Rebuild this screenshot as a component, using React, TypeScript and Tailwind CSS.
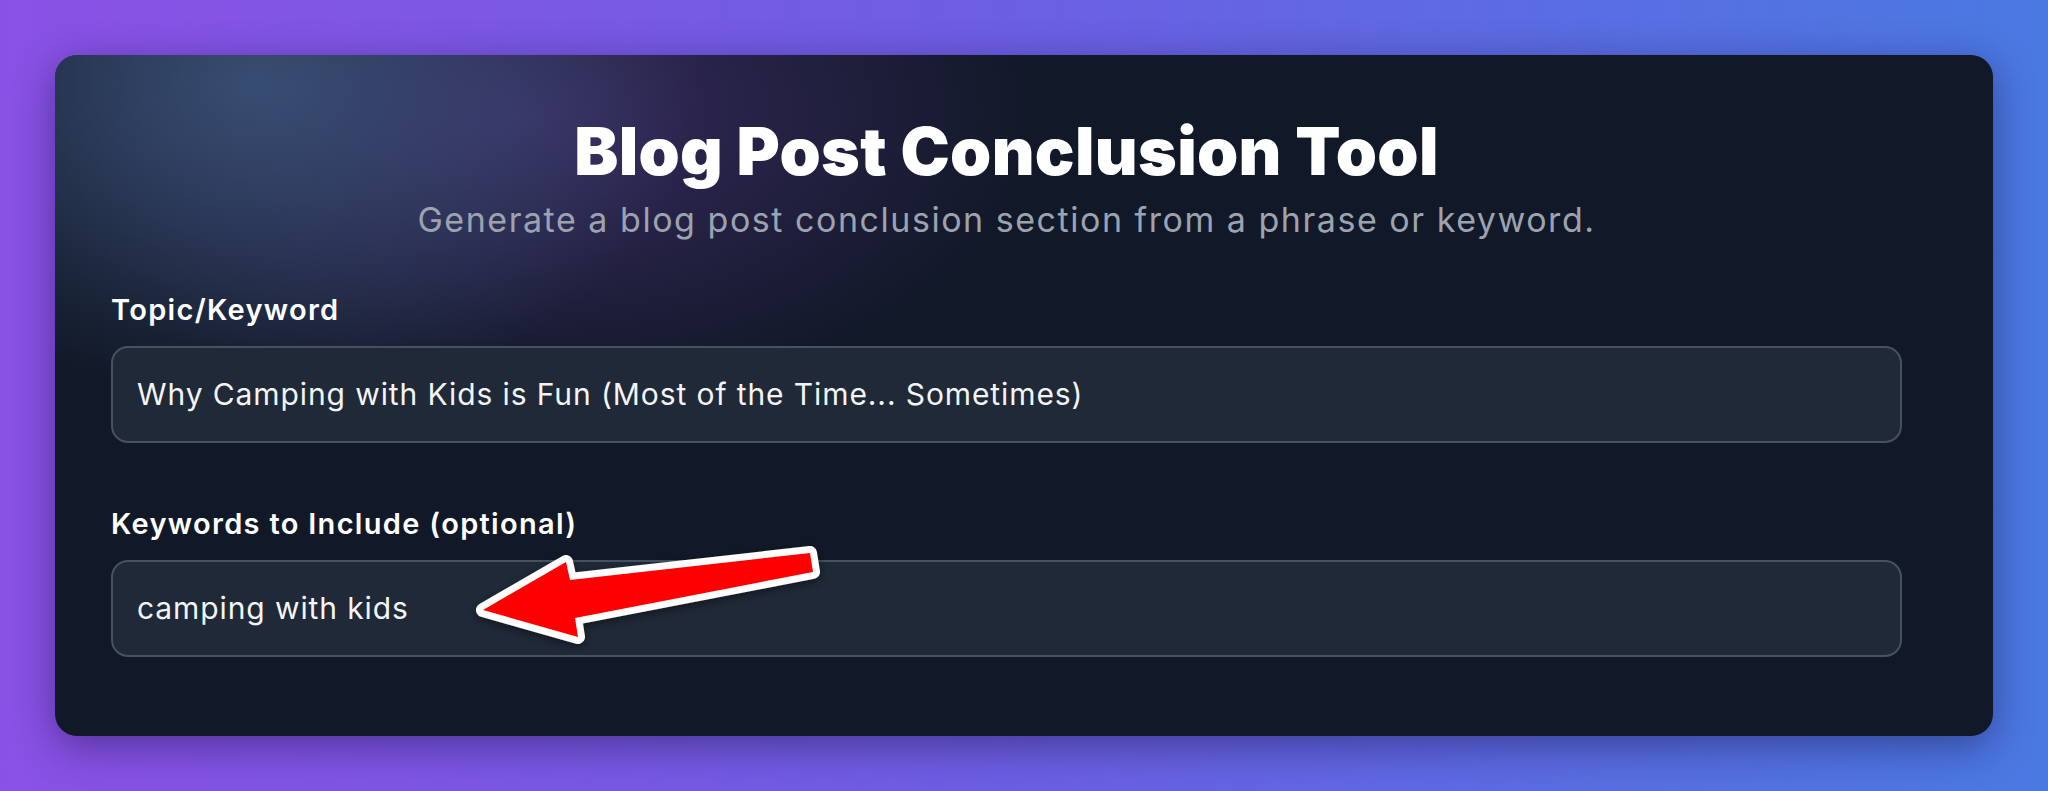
import React from "react";

const Field = ({
  label,
  value,
  className = "",
}: {
  label: string;
  value: string;
  className?: string;
}) => (
  <div className={className}>
    <label className="block text-[29px] leading-[36px] font-semibold tracking-[0.045em] text-white">
      {label}
    </label>
    <div className="mt-[18px] h-[97px] flex items-center rounded-[17px] border-2 border-[#465162] bg-[#1f2937] px-[24px] text-[30px] tracking-[0.03em] text-[#f3f4f6]">
      {value}
    </div>
  </div>
);

export default function App() {
  return (
    <div
      className="w-[2048px] h-[791px] p-[55px] bg-[linear-gradient(90deg,#8a51e5_0%,#6c5fe3_50%,#4a79e2_100%)]"
      style={{ fontFamily: "Inter, 'Noto Sans', sans-serif" }}
    >
      <div className="relative h-[681px] rounded-[22px] overflow-hidden shadow-[0_10px_40px_rgba(20,10,60,0.45)] bg-[#111827]">
        {/* glow in the top-left corner */}
        <div className="absolute inset-0 bg-[radial-gradient(ellipse_620px_440px_at_200px_30px,rgba(60,88,125,0.8),rgba(60,88,125,0)_72%),radial-gradient(ellipse_760px_420px_at_460px_60px,rgba(72,50,120,0.7),rgba(72,50,120,0)_70%)]" />

        <div className="relative pl-[56px] pr-[91px] pt-[63px]">
          <h1 className="text-center text-[66px] leading-[66px] font-black tracking-[0.005em] text-white">
            Blog Post Conclusion Tool
          </h1>
          <p className="mt-[16px] text-center text-[34px] leading-[40px] tracking-[0.045em] text-[#9ca3af]">
            Generate a blog post conclusion section from a phrase or keyword.
          </p>

          <Field
            className="mt-[52px]"
            label="Topic/Keyword"
            value="Why Camping with Kids is Fun (Most of the Time... Sometimes)"
          />
          <Field
            className="mt-[63px]"
            label="Keywords to Include (optional)"
            value="camping with kids"
          />
        </div>

        {/* annotation arrow */}
        <svg className="absolute inset-0 w-full h-full pointer-events-none">
          <defs>
            <filter id="arrowShadow" x="-20%" y="-50%" width="140%" height="200%">
              <feDropShadow dx="0" dy="3" stdDeviation="4" floodColor="#000" floodOpacity="0.45" />
            </filter>
          </defs>
          <polygon
            points="428,555 511,507 515,525 755,498 758,517 520,563 523,582"
            fill="#ff0000"
            stroke="#ffffff"
            strokeWidth="14"
            strokeLinejoin="round"
            paintOrder="stroke"
            filter="url(#arrowShadow)"
          />
        </svg>
      </div>
    </div>
  );
}
